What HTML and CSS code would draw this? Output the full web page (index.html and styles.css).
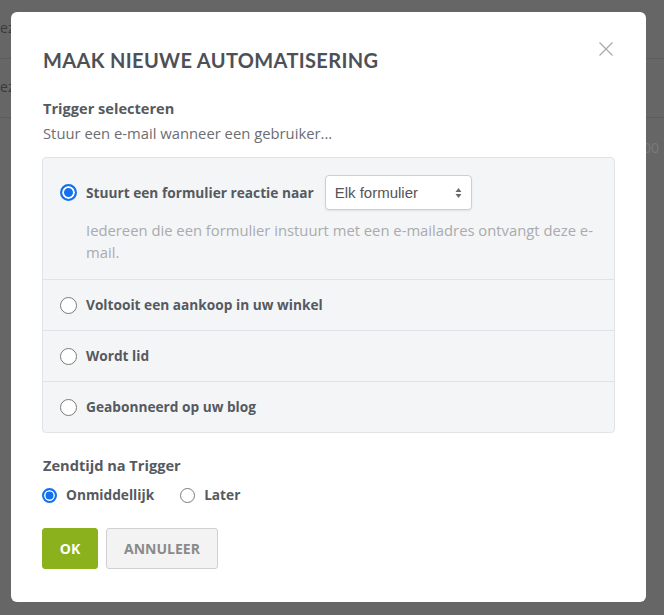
FILE: index.html
```html
<!DOCTYPE html>
<html lang="nl">
<head>
<meta charset="utf-8">
<title>Maak nieuwe automatisering</title>
<link rel="stylesheet" href="styles.css">
</head>
<body>
<div class="page">
  <div class="page-row"><span class="page-cell">Bez</span></div>
  <div class="page-row"><span class="page-cell">Bez</span></div>
  <div class="page-row page-row-num"><span class="page-num">100</span></div>
</div>

<div class="modal">
  <button class="close" aria-label="Sluiten">
    <svg width="14" height="14" viewBox="0 0 14 14"><path d="M0.5 0.5 L13.5 13.5 M13.5 0.5 L0.5 13.5" stroke="#a9a9a9" stroke-width="1.2" fill="none"/></svg>
  </button>
  <h1 class="title">MAAK NIEUWE AUTOMATISERING</h1>

  <h2 class="section-title">Trigger selecteren</h2>
  <p class="intro">Stuur een e-mail wanneer een gebruiker...</p>

  <div class="options">
    <div class="option option-first">
      <div class="option-line">
        <span class="radio radio-on"></span>
        <span class="option-label">Stuurt een formulier reactie naar</span>
        <div class="select">
          <span class="select-text">Elk formulier</span>
          <svg class="select-arrows" width="7" height="12" viewBox="0 0 7 12"><path d="M3.5 1 L6.5 5 L0.5 5 Z M0.5 7 L6.5 7 L3.5 11 Z" fill="#6a6a6a"/></svg>
        </div>
      </div>
      <p class="option-desc">Iedereen die een formulier instuurt met een e-mailadres ontvangt deze e-mail.</p>
    </div>
    <div class="option">
      <div class="option-line">
        <span class="radio"></span>
        <span class="option-label">Voltooit een aankoop in uw winkel</span>
      </div>
    </div>
    <div class="option">
      <div class="option-line">
        <span class="radio"></span>
        <span class="option-label">Wordt lid</span>
      </div>
    </div>
    <div class="option">
      <div class="option-line">
        <span class="radio"></span>
        <span class="option-label">Geabonneerd op uw blog</span>
      </div>
    </div>
  </div>

  <h2 class="section-title section-send">Zendtijd na Trigger</h2>
  <div class="timing">
    <span class="timing-item"><span class="radio radio-sm radio-on"></span><span class="option-label">Onmiddellijk</span></span>
    <span class="timing-item"><span class="radio radio-sm"></span><span class="option-label">Later</span></span>
  </div>

  <div class="actions">
    <button class="btn btn-ok">OK</button>
    <button class="btn btn-cancel">ANNULEER</button>
  </div>
</div>
</body>
</html>
```

FILE: styles.css
```css
html, body {
  margin: 0;
  padding: 0;
}
body {
  background: #666666;
  font-family: "Open Sans", "Liberation Sans", sans-serif;
  width: 664px;
  height: 615px;
  overflow: hidden;
  position: relative;
}

/* page behind the overlay */
.page {
  display: flex;
  flex-direction: column;
}
.page-row {
  height: 58px;
  border-bottom: 1px solid #5c5c5c;
  display: flex;
  align-items: center;
  font-size: 14px;
  color: #3a3a3a;
  justify-content: space-between;
}
.page-cell {
  margin-left: -9px;
  margin-top: -3px;
}
.page-row-num {
  border-bottom: none;
  justify-content: flex-end;
  align-items: flex-start;
  padding-top: 20px;
}
.page-num {
  color: #7a7a7a;
  margin-right: 5px;
}

/* modal */
.modal {
  position: absolute;
  left: 11px;
  top: 12px;
  width: 635px;
  height: 590px;
  box-sizing: border-box;
  background: #ffffff;
  border-radius: 6px;
  padding: 0 31px 0 31px;
  color: #555a60;
}
.close {
  position: absolute;
  top: 30px;
  right: 33px;
  width: 14px;
  height: 14px;
  padding: 0;
  border: none;
  background: none;
  display: flex;
}
.title {
  margin: 0 0 0 1px;
  padding-top: 35px;
  font-family: Lato, "Open Sans", sans-serif;
  font-weight: 700;
  font-size: 20px;
  letter-spacing: 0.35px;
  line-height: 26px;
  color: #4d5157;
}
.section-title {
  margin: 25px 0 0 1px;
  font-size: 14.6px;
  font-weight: 700;
  line-height: 20px;
  color: #555a60;
}
.intro {
  margin: 5px 0 0 1px;
  font-size: 14.8px;
  line-height: 20px;
  color: #6b6e72;
}
.options {
  margin-top: 14px;
  background: #f4f5f7;
  border: 1px solid #e1e3e6;
  border-radius: 4px;
}
.option {
  border-top: 1px solid #e1e3e6;
  padding: 15px 17px;
}
.option-first {
  border-top: none;
  padding: 17px 17px 16px;
}
.option-line {
  display: flex;
  align-items: center;
  min-height: 20px;
}
.option-label {
  font-size: 13.7px;
  font-weight: 700;
  line-height: 20px;
  color: #555a60;
}
.radio {
  width: 17px;
  height: 17px;
  box-sizing: border-box;
  border: 1px solid #7a7a7a;
  border-radius: 50%;
  background: #ffffff;
  margin-right: 9px;
  flex: none;
}
.radio-on {
  border: 2px solid #1371f0;
  box-shadow: inset 0 0 0 2px #ffffff;
  background: #1371f0;
}
.radio-sm {
  width: 15px;
  height: 15px;
}
.radio-sm.radio-on {
  box-shadow: inset 0 0 0 1.5px #ffffff;
}
.select {
  margin-left: 11px;
  width: 147px;
  height: 35px;
  box-sizing: border-box;
  border: 1px solid #cfcfcf;
  border-radius: 4px;
  background: #ffffff;
  box-shadow: 0 1px 2px rgba(0,0,0,0.08);
  display: flex;
  align-items: center;
  justify-content: space-between;
  padding: 0 9px 0 9px;
}
.select-text {
  font-family: "Liberation Sans", Arial, sans-serif;
  font-size: 15px;
  color: #555555;
}
.option-desc {
  margin: 9px 0 0 26px;
  font-size: 14.8px;
  line-height: 22px;
  color: #a9abae;
}
.section-send {
  margin-top: 22px;
}
.timing {
  margin-top: 10px;
  display: flex;
  align-items: center;
  gap: 26px;
}
.timing-item {
  display: flex;
  align-items: center;
}
.actions {
  margin-top: 23px;
  display: flex;
  gap: 8px;
}
.btn {
  height: 41px;
  box-sizing: border-box;
  border-radius: 3px;
  font-family: "Open Sans", sans-serif;
  font-size: 14px;
  font-weight: 700;
  cursor: pointer;
  padding: 0;
}
.btn-ok {
  background: #8bb21c;
  border: 1px solid #8bb21c;
  color: #ffffff;
  width: 56px;
}
.btn-cancel {
  background: #f3f3f3;
  border: 1px solid #d0d0d0;
  color: #8a8a8a;
  width: 112px;
}
```
